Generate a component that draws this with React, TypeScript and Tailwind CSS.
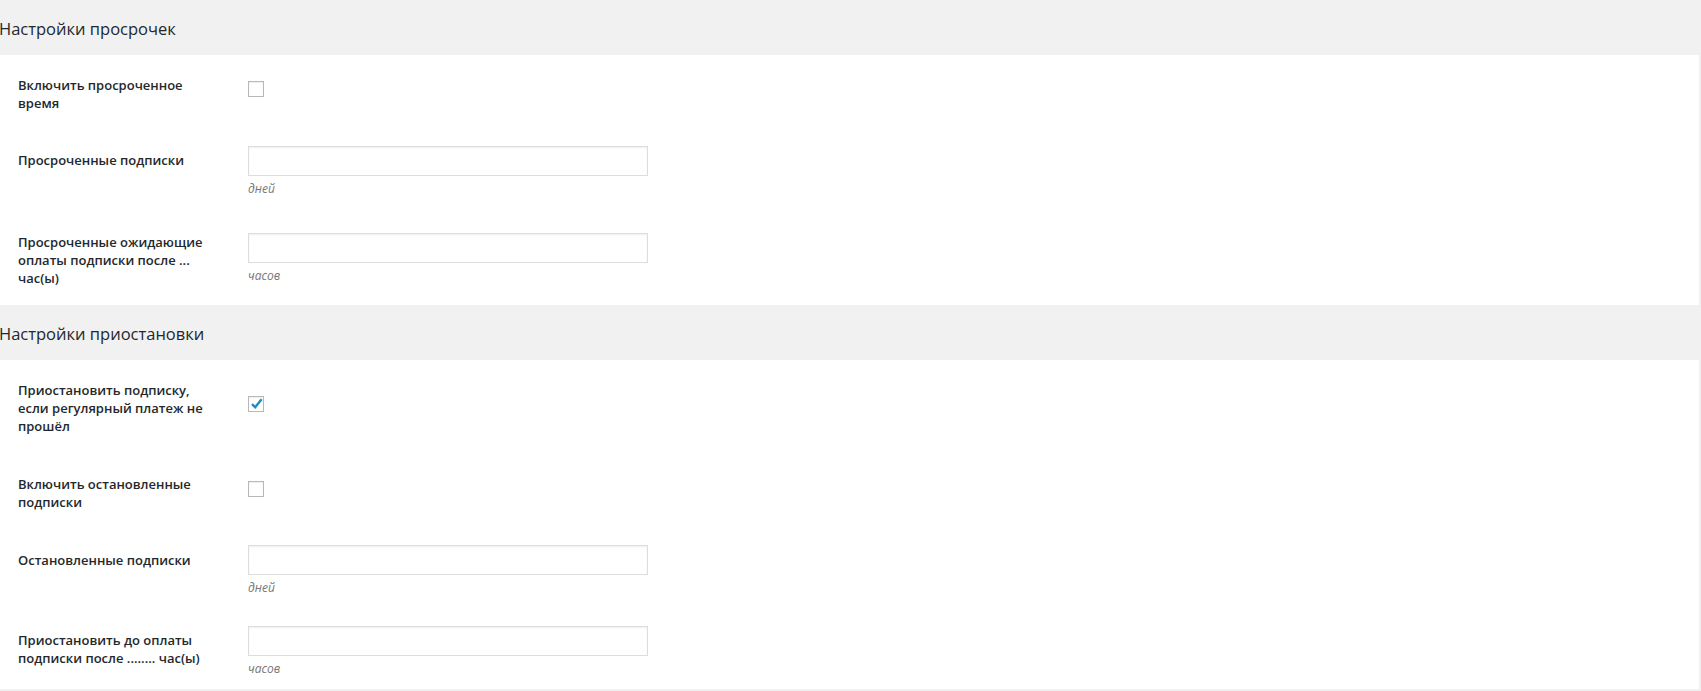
import React from "react";

const font = { fontFamily: '"Open Sans", "Noto Sans", sans-serif' };

function Checkbox({ checked }: { checked?: boolean }) {
  return (
    <div className="relative w-[16px] h-[16px] border border-[#b4b9be] bg-white shadow-[inset_0_1px_2px_rgba(0,0,0,0.07)]">
      {checked && (
        <svg className="absolute left-[0px] top-[-1px]" width="16" height="16" viewBox="0 0 16 16">
          <path d="M3 8.2 L6.2 11.2 L12.6 3.2" fill="none" stroke="#1e8cbe" strokeWidth="2.4" strokeLinecap="butt" strokeLinejoin="miter" />
        </svg>
      )}
    </div>
  );
}

function Input() {
  return <div className="w-[400px] h-[30px] border border-[#dddddd] bg-white shadow-[inset_0_1px_2px_rgba(0,0,0,0.07)]" />;
}

function Desc({ children }: { children: React.ReactNode }) {
  return <div className="mt-[4px] text-[12px] leading-[18px] italic text-[#777777]">{children}</div>;
}

function Row({
  label,
  labelPt,
  fieldPt,
  height,
  children,
}: {
  label: React.ReactNode;
  labelPt: string;
  fieldPt: string;
  height: string;
  children: React.ReactNode;
}) {
  return (
    <div className={`flex ${height}`}>
      <div className={`w-[248px] pl-[18px] pr-[30px] ${labelPt} text-[13px] leading-[18px] font-semibold text-[#23282d]`}>{label}</div>
      <div className={fieldPt}>{children}</div>
    </div>
  );
}

function Header({ children }: { children: React.ReactNode }) {
  return (
    <div className="h-[55px] flex items-center pt-[3px] text-[16.5px] font-medium text-[#23282d]">
      <span className="-ml-[1px]">{children}</span>
    </div>
  );
}

export default function App() {
  return (
    <div className="w-[1701px] h-[691px] bg-[#f1f1f1] overflow-hidden" style={font}>
      <Header>Настройки просрочек</Header>
      <div className="w-[1699px] bg-white h-[250px]">
        <Row label={<>Включить просроченное<br />время</>} labelPt="pt-[21px]" fieldPt="pt-[26px]" height="h-[76px]">
          <Checkbox />
        </Row>
        <Row label="Просроченные подписки" labelPt="pt-[20px]" fieldPt="pt-[15px]" height="h-[82px]">
          <Input />
          <Desc>дней</Desc>
        </Row>
        <Row
          label={<>Просроченные ожидающие<br />оплаты подписки после ...<br />час(ы)</>}
          labelPt="pt-[20px]"
          fieldPt="pt-[20px]"
          height="h-[92px]"
        >
          <Input />
          <Desc>часов</Desc>
        </Row>
      </div>
      <Header>Настройки приостановки</Header>
      <div className="w-[1699px] bg-white h-[329px]">
        <Row
          label={<>Приостановить подписку,<br />если регулярный платеж не<br />прошёл</>}
          labelPt="pt-[21px]"
          fieldPt="pt-[36px]"
          height="h-[94px]"
        >
          <Checkbox checked />
        </Row>
        <Row label={<>Включить остановленные<br />подписки</>} labelPt="pt-[21px]" fieldPt="pt-[27px]" height="h-[77px]">
          <Checkbox />
        </Row>
        <Row label="Остановленные подписки" labelPt="pt-[20px]" fieldPt="pt-[14px]" height="h-[80px]">
          <Input />
          <Desc>дней</Desc>
        </Row>
        <Row label={<>Приостановить до оплаты<br />подписки после ........ час(ы)</>} labelPt="pt-[20px]" fieldPt="pt-[15px]" height="h-[78px]">
          <Input />
          <Desc>часов</Desc>
        </Row>
      </div>
    </div>
  );
}
